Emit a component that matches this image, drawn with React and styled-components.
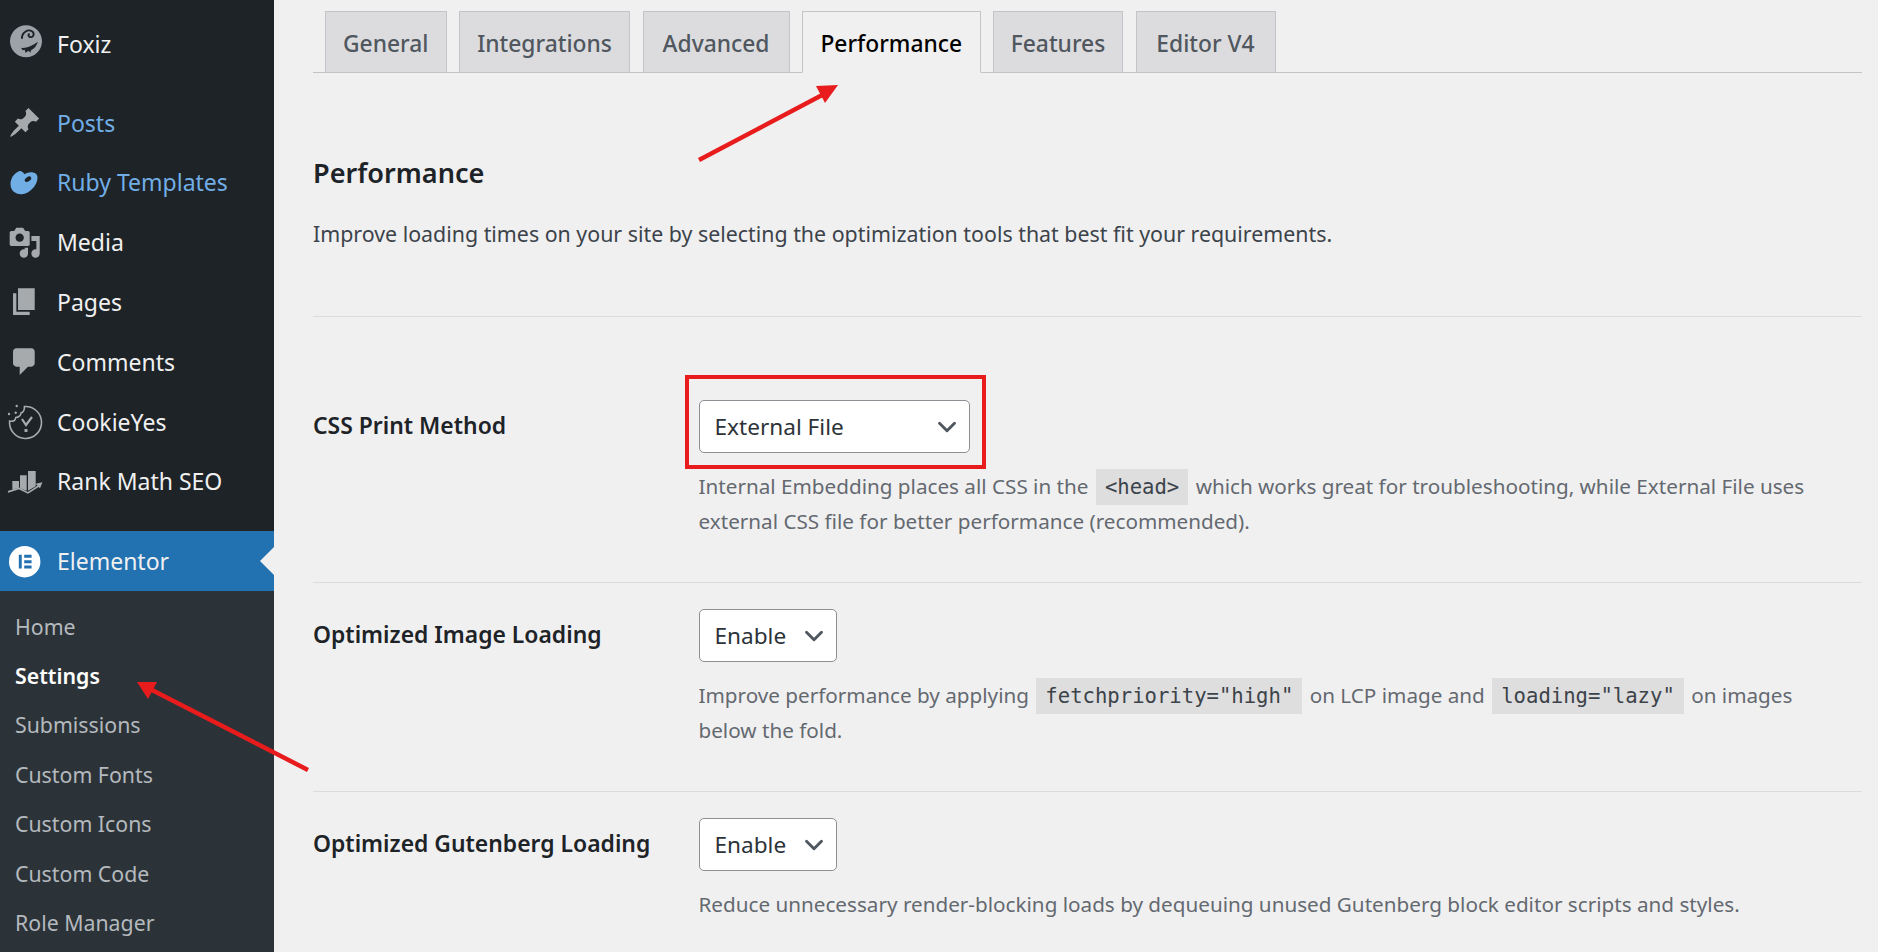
import styled, { createGlobalStyle } from "styled-components";
import { ChevronDown } from "lucide-react";

const GlobalStyle = createGlobalStyle`
  html, body {
    margin: 0;
    height: 100%;
    overflow: hidden;
    background: #f0f0f1;
    font-family: "Noto Sans", "Liberation Sans", sans-serif;
  }
`;

const Page = styled.div`
  position: relative;
  display: flex;
  width: 1878px;
  height: 952px;
  overflow: hidden;
`;

const Sidebar = styled.aside`
  flex: 0 0 274px;
  display: flex;
  flex-direction: column;
  background: #1d2327;
`;

const Menu = styled.nav`
  display: flex;
  flex-direction: column;
  padding-top: ${(p) => p.$top || 0}px;
`;

const MenuItem = styled.div`
  position: relative;
  display: flex;
  align-items: center;
  gap: 15.6px;
  height: 59.8px;
  padding-left: 8px;
  font-size: 23px;
  color: ${(p) => (p.$accent ? "#72aee6" : "#f0f0f1")};
  background: ${(p) => (p.$current ? "#2271b1" : "transparent")};
  svg {
    flex: 0 0 33.4px;
    width: 33.4px;
    height: 33.4px;
    overflow: visible;
  }
  ${(p) =>
    p.$current &&
    `&::after {
      content: "";
      position: absolute;
      right: 0;
      top: 16px;
      border: 14px solid transparent;
      border-left: 0;
      border-right-color: #f0f0f1;
    }`}
`;

const SubMenu = styled.div`
  flex: 1;
  display: flex;
  flex-direction: column;
  padding-top: 10.5px;
  background: #2c3338;
`;

const SubItem = styled.div`
  height: 49.4px;
  line-height: 49.4px;
  padding-left: 15px;
  font-size: 21.3px;
  font-weight: ${(p) => (p.$active ? 600 : 400)};
  color: ${(p) => (p.$active ? "#fff" : "#b4b9be")};
`;

const Main = styled.main`
  flex: 1;
  min-width: 0;
  padding: 11px 16px 0 39px;
`;

const TabBar = styled.div`
  display: flex;
  gap: 12.5px;
  height: 61px;
  padding-left: 12px;
  border-bottom: 1px solid #c3c4c7;
`;

const Tab = styled.div`
  flex: 0 0 ${(p) => p.$width}px;
  height: ${(p) => (p.$active ? 62 : 61)}px;
  box-sizing: border-box;
  line-height: 63px;
  text-align: center;
  font-size: 22.8px;
  font-weight: 500;
  border: 1px solid #c3c4c7;
  border-bottom: ${(p) => (p.$active ? "1px solid #f0f0f1" : "none")};
  background: ${(p) => (p.$active ? "#f0f0f1" : "#dcdcde")};
  color: ${(p) => (p.$active ? "#000" : "#50575e")};
`;

const Heading = styled.h2`
  margin: 82px 0 0;
  font-size: 27.1px;
  line-height: 36px;
  font-weight: 600;
  color: #1d2327;
`;

const Intro = styled.p`
  margin: 25px 0 65px;
  font-size: 21.37px;
  line-height: 35px;
  color: #3c434a;
`;

const Row = styled.section`
  display: grid;
  grid-template-columns: 385.5px 1fr;
  padding: ${(p) => p.$top}px 0 ${(p) => p.$bottom}px;
  border-top: 1px solid #dcdcde;
`;

const Label = styled.div`
  font-size: 22.9px;
  line-height: 52px;
  font-weight: 600;
  color: #1d2327;
`;

const Select = styled.div`
  display: flex;
  align-items: center;
  justify-content: space-between;
  box-sizing: border-box;
  width: ${(p) => p.$width}px;
  height: 53px;
  padding: 0 7px 0 15px;
  font-size: 22.6px;
  color: #2c3338;
  background: #fff;
  border: 1px solid #8c8f94;
  border-radius: 5px;
  svg {
    color: #50575e;
  }
`;

const Help = styled.p`
  margin: 16px 0 0;
  font-size: 20.68px;
  line-height: 35px;
  white-space: nowrap;
  color: #646970;
`;

const Code = styled.code`
  margin: 0 2px;
  padding: 6px 9px;
  line-height: 1;
  font-family: "DejaVu Sans Mono", "Liberation Mono", monospace;
  font-size: 20.6px;
  color: #3c434a;
  background: #dedede;
`;

const Callout = styled.div`
  position: absolute;
  left: 685px;
  top: 375px;
  width: 301px;
  height: 94px;
  box-sizing: border-box;
  border: 4px solid #e81c1c;
`;

const Arrows = styled.svg`
  position: absolute;
  left: 0;
  top: 0;
  pointer-events: none;
`;

const FoxizIcon = () => (
  <svg viewBox="4 7.2 33.4 33.4">
    <circle cx="22" cy="21.5" r="16" fill="#9ca2a7" />
    <path d="M18 19C17.5 12.5 24 9 28 11.5c3 2 1.5 6.5-2 5.7-2-.5-2-2.7-.3-3" fill="none" stroke="#1d2327" strokeWidth="1.9" />
    <path d="M17 28c5 1 11-2 17-6-1.5 4-3.5 7-7 8.5l-.5 2.5-2-2-3 2-.8-3-2 .5z" fill="#1d2327" />
  </svg>
);

const PinIcon = () => (
  <svg viewBox="0 0 20 20" fill="#a7aaad">
    <path d="M10.44 3.02l1.82-1.82 6.36 6.35-1.83 1.82c-1.05-.68-2.48-.57-3.41.36l-.75.75c-.92.93-1.04 2.35-.35 3.41l-1.83 1.82-2.41-2.41-2.8 2.79c-.42.42-3.38 2.71-3.8 2.29s1.86-3.39 2.28-3.81l2.79-2.79L4.1 9.36l1.83-1.82c1.05.69 2.48.57 3.4-.36l.75-.75c.93-.92 1.05-2.35.36-3.41z" />
  </svg>
);

const PaletteIcon = () => (
  <svg viewBox="4 1.8 33.4 33.4">
    <path fill="#72aee6" d="M15 7C9.5 9 6.5 15 6.5 20c0 6 5 10.5 11.5 10 7-.5 15-8 15.5-16 .3-4-2.500-6-6.500-6-3 0-5 1-6.500 2-1-1-2.500-4-5.500-3z" />
    <ellipse cx="24" cy="15" rx="3.6" ry="2.2" transform="rotate(-35 24 15)" fill="#1d2327" />
  </svg>
);

const MediaIcon = () => (
  <svg viewBox="0 0 20 20" fill="#a7aaad">
    <path d="M13 11V4c0-.55-.45-1-1-1h-1.67L9 1H5L3.67 3H2c-.55 0-1 .45-1 1v7c0 .55.45 1 1 1h10c.55 0 1-.45 1-1zM7 4.5c1.38 0 2.5 1.12 2.5 2.5S8.38 9.5 7 9.5 4.5 8.38 4.5 7 5.62 4.5 7 4.5zM14 6h5v10.5c0 1.38-1.12 2.5-2.5 2.5S14 17.88 14 16.5s1.12-2.5 2.5-2.5c.17 0 .34.02.5.05V9h-3V6zm-4 8.05V13h2v3.5c0 1.38-1.12 2.5-2.5 2.5S7 17.88 7 16.5 8.12 14 9.5 14c.17 0 .34.02.5.05z" />
  </svg>
);

const PagesIcon = () => (
  <svg viewBox="0 0 20 20" fill="#a7aaad">
    <path d="M6 15V2h10v13H6zm-1 1h8v2H3V5h2v11z" />
  </svg>
);

const CommentIcon = () => (
  <svg viewBox="0 0 20 20" fill="#a7aaad">
    <path d="M5 2h9c1.1 0 2 .9 2 2v7c0 1.1-.9 2-2 2h-2l-5 5v-5H5c-1.1 0-2-.9-2-2V4c0-1.1.9-2 2-2z" />
  </svg>
);

const CookieIcon = () => (
  <svg viewBox="4 5 33.4 33.4" fill="none" stroke="#a7aaad" strokeWidth="1.6">
    <path d="M20.5 6.5A16 16 0 1 1 5.6 21c3.4 1 5.9-.5 6.2-3.5 2.7 0 5.2-2 5.2-4.5 2-.5 3.5-3 3.5-6.5z" />
    <path d="M18 19l4 6 6-8" strokeWidth="2.2" />
    <rect x="20.5" y="29" width="3" height="3" fill="#a7aaad" stroke="none" />
    <circle cx="12.7" cy="6" r="1.2" fill="#a7aaad" stroke="none" />
    <circle cx="5" cy="14" r="1.2" fill="#a7aaad" stroke="none" />
    <circle cx="11.7" cy="12.7" r="1.2" fill="#a7aaad" stroke="none" />
  </svg>
);

const RankIcon = () => (
  <svg viewBox="4 4.8 33.4 33.4" fill="#a7aaad">
    <path d="M8.3 20.7H15v7l-6.7 1.5zM16 15h6.7v15.5L16 28zM24 10.7h7.7V26L24 30.5z" />
    <path d="M4 31.7L15 28.3l9 4.4L35 25.5" fill="none" stroke="#a7aaad" strokeWidth="1.7" />
    <path d="M38.5 22l-7 1.5 4.5 4.5z" />
  </svg>
);

const ElementorIcon = () => (
  <svg viewBox="0 0 34 34">
    <circle cx="17" cy="17" r="16" fill="#fff" />
    <path fill="#2271b1" d="M11 10h3v14h-3zM16.5 10H24v3h-7.5zM16.5 15.5H24v3h-7.5zM16.5 21H24v3h-7.5z" />
  </svg>
);

const primaryItems = [
  { label: "Posts", icon: <PinIcon />, accent: true },
  { label: "Ruby Templates", icon: <PaletteIcon />, accent: true },
  { label: "Media", icon: <MediaIcon /> },
  { label: "Pages", icon: <PagesIcon /> },
  { label: "Comments", icon: <CommentIcon /> },
  { label: "CookieYes", icon: <CookieIcon /> },
  { label: "Rank Math SEO", icon: <RankIcon /> },
];

const subItems = ["Home", "Settings", "Submissions", "Custom Fonts", "Custom Icons", "Custom Code", "Role Manager"];
const tabs = [
  { label: "General", width: 121.5 },
  { label: "Integrations", width: 171 },
  { label: "Advanced", width: 147 },
  { label: "Performance", width: 178.5 },
  { label: "Features", width: 130 },
  { label: "Editor V4", width: 140 },
];

export default function App() {
  return (
    <Page>
      <GlobalStyle />
      <Sidebar>
        <Menu $top={14}>
          <MenuItem>
            <FoxizIcon />
            Foxiz
          </MenuItem>
        </Menu>
        <Menu $top={19}>
          {primaryItems.map((item) => (
            <MenuItem key={item.label} $accent={item.accent}>
              {item.icon}
              {item.label}
            </MenuItem>
          ))}
        </Menu>
        <Menu $top={20}>
          <MenuItem $current>
            <ElementorIcon />
            Elementor
          </MenuItem>
        </Menu>
        <SubMenu>
          {subItems.map((item) => (
            <SubItem key={item} $active={item === "Settings"}>
              {item}
            </SubItem>
          ))}
        </SubMenu>
      </Sidebar>
      <Main>
        <TabBar>
          {tabs.map((tab) => (
            <Tab key={tab.label} $width={tab.width} $active={tab.label === "Performance"}>
              {tab.label}
            </Tab>
          ))}
        </TabBar>
        <Heading>Performance</Heading>
        <Intro>Improve loading times on your site by selecting the optimization tools that best fit your requirements.</Intro>
        <Row $top={83} $bottom={43}>
          <Label>CSS Print Method</Label>
          <div>
            <Select $width={271}>
              External File
              <ChevronDown size={30} strokeWidth={2.3} />
            </Select>
            <Help>
              Internal Embedding places all CSS in the <Code>&lt;head&gt;</Code> which works great for troubleshooting, while External File uses
              <br />
              external CSS file for better performance (recommended).
            </Help>
          </div>
        </Row>
        <Row $top={26} $bottom={43}>
          <Label>Optimized Image Loading</Label>
          <div>
            <Select $width={138}>
              Enable
              <ChevronDown size={30} strokeWidth={2.3} />
            </Select>
            <Help>
              Improve performance by applying <Code>fetchpriority="high"</Code> on LCP image and <Code>loading="lazy"</Code> on images
              <br />
              below the fold.
            </Help>
          </div>
        </Row>
        <Row $top={26} $bottom={20}>
          <Label>Optimized Gutenberg Loading</Label>
          <div>
            <Select $width={138}>
              Enable
              <ChevronDown size={30} strokeWidth={2.3} />
            </Select>
            <Help>Reduce unnecessary render-blocking loads by dequeuing unused Gutenberg block editor scripts and styles.</Help>
          </div>
        </Row>
      </Main>
      <Callout />
      <Arrows width="1878" height="952" viewBox="0 0 1878 952">
        <path d="M699 160L826 93" stroke="#e81c1c" strokeWidth="4.5" />
        <path d="M838 85L816 86L825 103z" fill="#e81c1c" />
        <path d="M308 770L150 689" stroke="#e81c1c" strokeWidth="4.5" />
        <path d="M137 682L157 682L148 699z" fill="#e81c1c" />
      </Arrows>
    </Page>
  );
}
